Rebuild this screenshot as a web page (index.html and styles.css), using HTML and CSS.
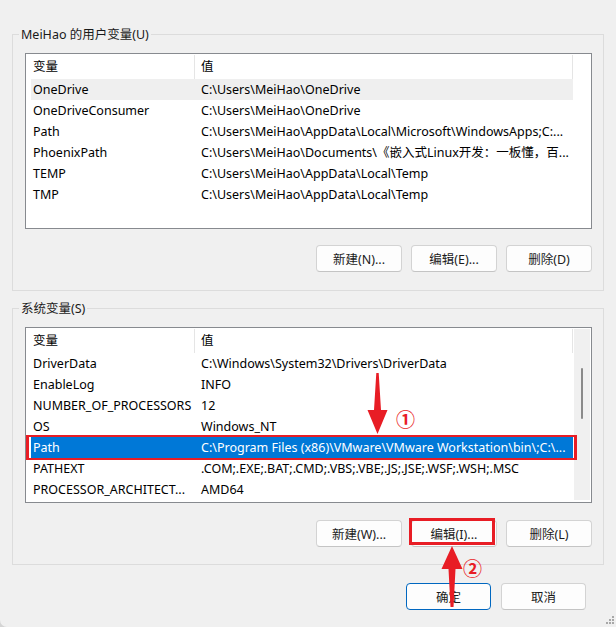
FILE: index.html
```html
<!DOCTYPE html>
<html lang="zh-CN">
<head>
<meta charset="utf-8">
<title>环境变量</title>
<link rel="stylesheet" href="styles.css">
</head>
<body>
<div class="window">
  <fieldset class="group group-user">
    <legend>MeiHao 的用户变量(U)</legend>
    <div class="listview">
      <div class="lv-main">
        <div class="lv-head"><div class="c1">变量</div><div class="c2">值</div></div>
        <div class="lv-row hover"><div class="c1">OneDrive</div><div class="c2">C:\Users\MeiHao\OneDrive</div></div>
        <div class="lv-row"><div class="c1">OneDriveConsumer</div><div class="c2">C:\Users\MeiHao\OneDrive</div></div>
        <div class="lv-row"><div class="c1">Path</div><div class="c2">C:\Users\MeiHao\AppData\Local\Microsoft\WindowsApps;C:...</div></div>
        <div class="lv-row"><div class="c1">PhoenixPath</div><div class="c2">C:\Users\MeiHao\Documents\《嵌入式Linux开发：一板懂，百...</div></div>
        <div class="lv-row"><div class="c1">TEMP</div><div class="c2">C:\Users\MeiHao\AppData\Local\Temp</div></div>
        <div class="lv-row"><div class="c1">TMP</div><div class="c2">C:\Users\MeiHao\AppData\Local\Temp</div></div>
      </div>
      <div class="lv-side"></div>
    </div>
    <div class="btn-row">
      <button class="btn">新建(N)...</button>
      <button class="btn">编辑(E)...</button>
      <button class="btn">删除(D)</button>
    </div>
  </fieldset>

  <fieldset class="group group-sys">
    <legend>系统变量(S)</legend>
    <div class="listview">
      <div class="lv-main">
        <div class="lv-head"><div class="c1">变量</div><div class="c2">值</div></div>
        <div class="lv-row"><div class="c1">DriverData</div><div class="c2">C:\Windows\System32\Drivers\DriverData</div></div>
        <div class="lv-row"><div class="c1">EnableLog</div><div class="c2">INFO</div></div>
        <div class="lv-row"><div class="c1">NUMBER_OF_PROCESSORS</div><div class="c2">12</div></div>
        <div class="lv-row"><div class="c1">OS</div><div class="c2">Windows_NT</div></div>
        <div class="lv-row selected"><div class="c1">Path</div><div class="c2">C:\Program Files (x86)\VMware\VMware Workstation\bin\;C:\...</div></div>
        <div class="lv-row"><div class="c1">PATHEXT</div><div class="c2">.COM;.EXE;.BAT;.CMD;.VBS;.VBE;.JS;.JSE;.WSF;.WSH;.MSC</div></div>
        <div class="lv-row"><div class="c1">PROCESSOR_ARCHITECT...</div><div class="c2">AMD64</div></div>
      </div>
      <div class="lv-side scrollbar"><div class="track"><div class="thumb"></div></div></div>
    </div>
    <div class="btn-row">
      <button class="btn">新建(W)...</button>
      <button class="btn">编辑(I)...</button>
      <button class="btn">删除(L)</button>
    </div>
  </fieldset>

  <div class="footer">
    <button class="btn btn-primary">确定</button>
    <button class="btn">取消</button>
  </div>

  <div class="mark mark-row"></div>
  <svg class="arrow arrow-down" viewBox="366 370 24 66" width="24" height="66">
    <polygon points="376.3,373 378.7,373 381,410 387.5,410 377.5,434 367.5,410 374,410"/>
  </svg>
  <span class="num num-1">①</span>

  <div class="mark mark-btn"></div>
  <svg class="arrow arrow-up" viewBox="440 544 24 66" width="24" height="66">
    <polygon points="452,546 462.5,569 455.5,569 453.5,607 450.5,607 448.5,569 441.5,569"/>
  </svg>
  <span class="num num-2">②</span>

  <svg class="grip" viewBox="0 0 12 10" width="12" height="10">
    <rect x="9" y="0" width="2" height="2"/>
    <rect x="6" y="3" width="2" height="2"/><rect x="9" y="3" width="2" height="2"/>
    <rect x="3" y="6" width="2" height="2"/><rect x="6" y="6" width="2" height="2"/><rect x="9" y="6" width="2" height="2"/>
  </svg>
</div>
</body>
</html>
```

FILE: styles.css
```css
* { box-sizing: border-box; }

html, body {
  margin: 0;
  padding: 0;
  background: #d4d4d4;
}

body {
  width: 616px;
  height: 627px;
  overflow: hidden;
}

.window {
  position: relative;
  width: 616px;
  height: 627px;
  padding-top: 26px;
  background: #f0f0f0;
  border-bottom-left-radius: 7px;
  font-family: "Noto Sans", "Noto Sans CJK SC", sans-serif;
  font-size: 12.5px;
  color: #000;
}

.group {
  margin: 0 12px;
  padding: 10px 11px 18px 12px;
  border: 1px solid #dcdcdc;
  min-width: 0;
}

.group-sys {
  margin-top: 9px;
  padding-bottom: 17px;
}

.group legend {
  margin-left: -6px;
  padding: 0 2px;
  height: 17px;
  line-height: 17px;
  color: #1a1a1a;
}

.listview {
  display: flex;
  height: 176px;
  border: 1px solid #878a8f;
  background: #fff;
}

.lv-main {
  flex: 1;
  min-width: 0;
  padding-left: 5px;
}

.lv-side {
  width: 18px;
  flex: none;
}

.scrollbar {
  padding: 1px 1px 2px 1px;
}

.track {
  height: 100%;
  background: #f0f0f0;
  padding-top: 39px;
}

.thumb {
  width: 2px;
  height: 51px;
  margin-left: 7px;
  background: #8a8a8a;
  border-radius: 1px;
}

.lv-head {
  display: flex;
  height: 25px;
  padding-top: 1px;
}

.lv-head .c1,
.lv-head .c2 {
  height: 24px;
  line-height: 23px;
  border-right: 1px solid #e5e5e5;
}

.lv-row {
  display: flex;
  height: 21px;
  line-height: 21px;
}

.c1 {
  width: 164px;
  flex: none;
  padding-left: 2px;
  white-space: nowrap;
  overflow: hidden;
}

.c2 {
  flex: 1;
  min-width: 0;
  padding-left: 6px;
  white-space: nowrap;
  overflow: hidden;
}

.lv-row.hover {
  background: #efefef;
}

.lv-row.selected {
  background: #0078d7;
  color: #fff;
}

.btn-row {
  display: flex;
  justify-content: flex-end;
  gap: 9px;
  margin-top: 16px;
}

.group-sys .btn-row {
  margin-top: 17px;
}

.btn {
  width: 86px;
  height: 27px;
  padding: 0;
  border: 1px solid #d3d3d3;
  border-bottom-color: #c4c4c4;
  border-radius: 4px;
  background: #fdfdfd;
  font: inherit;
  color: #1b1b1b;
}

.footer {
  display: flex;
  justify-content: flex-end;
  gap: 10px;
  margin-top: 18px;
  padding-right: 30px;
}

.footer .btn {
  width: 85px;
}

.btn-primary {
  border-color: #0067c0;
}

/* annotations */
.mark {
  position: absolute;
  border-style: solid;
  border-color: #e81d25;
}

.mark-row {
  left: 26px;
  top: 435px;
  width: 551px;
  height: 25px;
  border-width: 2px 3px;
}

.mark-btn {
  left: 409px;
  top: 518px;
  width: 86px;
  height: 27px;
  border-width: 3px;
}

.arrow {
  position: absolute;
  fill: #e81d25;
}

.arrow-down {
  left: 366px;
  top: 370px;
}

.arrow-up {
  left: 440px;
  top: 544px;
}

.num {
  position: absolute;
  font-family: "Noto Sans CJK SC", sans-serif;
  font-weight: 700;
  font-size: 19px;
  line-height: 19px;
  color: #e81d25;
}

.num-1 {
  left: 396px;
  top: 409px;
}

.num-2 {
  left: 463px;
  top: 558px;
}

.grip {
  position: absolute;
  right: 1px;
  bottom: 1px;
  fill: #a8a8a8;
}
```
